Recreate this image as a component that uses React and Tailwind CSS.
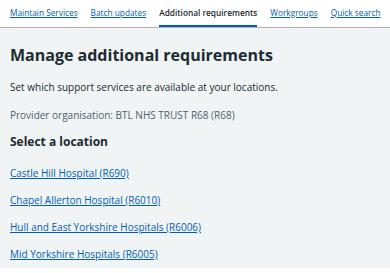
import React from 'react';

const tabs = [
  { name: 'Maintain Services', active: false },
  { name: 'Batch updates', active: false },
  { name: 'Additional requirements', active: true },
  { name: 'Workgroups', active: false },
  { name: 'Quick search', active: false },
];

const locations = [
  'Castle Hill Hospital (R690)',
  'Chapel Allerton Hospital (R6010)',
  'Hull and East Yorkshire Hospitals (R6006)',
  'Mid Yorkshire Hospitals (R6005)',
];

export default function App() {
  return (
    <div className="w-[390px] h-[273px] bg-white font-['Open_Sans',sans-serif] text-[#212b32] overflow-hidden">
      {/* tab bar */}
      <nav className="h-[28px] bg-white border-b border-[#b1b4b6] flex items-stretch px-[10px] gap-[13px]">
        {tabs.map((t) => (
          <a
            key={t.name}
            href="#"
            className={`flex items-center text-[8.3px] whitespace-nowrap border-b-2 pt-[1px] ${
              t.active
                ? 'text-[#212b32] font-semibold border-[#005eb8]'
                : 'text-[#005eb8] underline border-transparent'
            }`}
          >
            {t.name}
          </a>
        ))}
      </nav>

      <main className="bg-[#f0f4f5] h-[240px] px-[10px] pt-[17px]">
        <h1 className="text-[16px] font-bold leading-[20px]">Manage additional requirements</h1>
        <p className="text-[10px] mt-[15px] leading-[14px]">Set which support services are available at your locations.</p>
        <p className="text-[10px] mt-[14px] leading-[14px] text-[#4c6272]">Provider organisation: BTL NHS TRUST R68 (R68)</p>
        <h2 className="text-[12px] font-bold mt-[12px] leading-[16px]">Select a location</h2>
        <ul className="mt-[16px] flex flex-col gap-[13px]">
          {locations.map((l) => (
            <li key={l} className="text-[10px] leading-[14px]">
              <a href="#" className="text-[#005eb8] underline">{l}</a>
            </li>
          ))}
        </ul>
      </main>
    </div>
  );
}
